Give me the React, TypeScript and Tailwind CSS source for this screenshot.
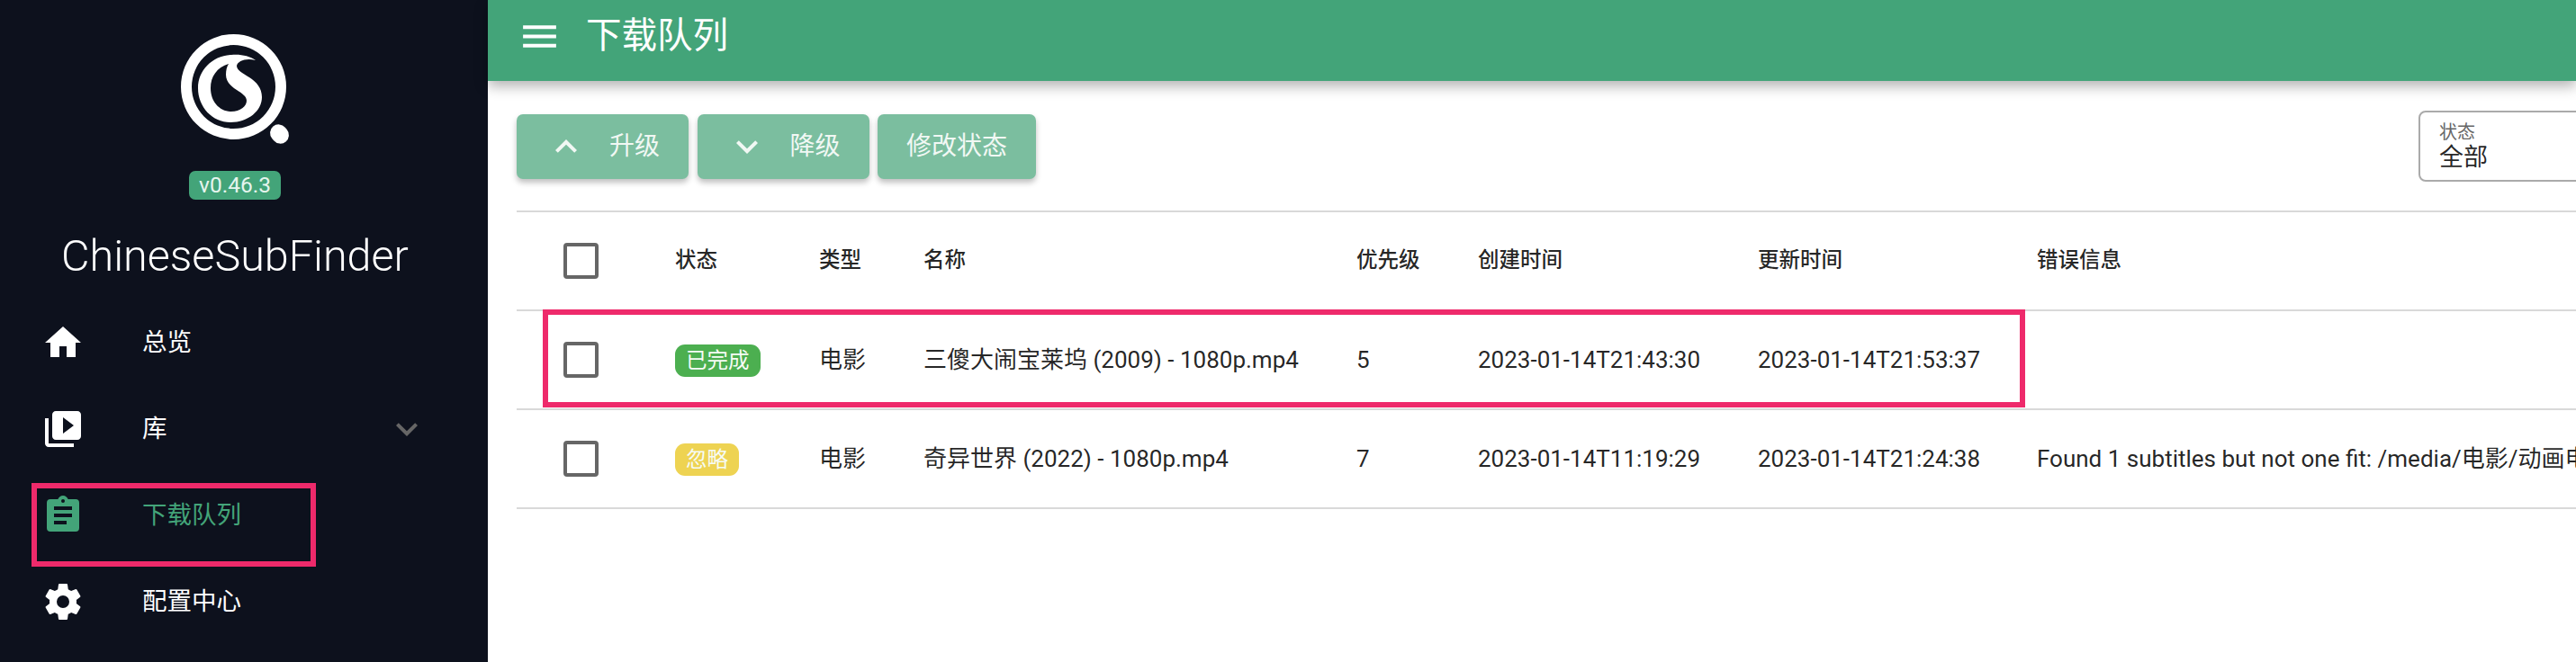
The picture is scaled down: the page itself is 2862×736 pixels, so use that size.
import React from 'react';

const FONT = 'font-[Roboto,"Noto_Sans_CJK_SC",sans-serif]';
const ROW_GRID = 'grid grid-cols-[176px_160px_116px_481px_135px_311px_310px_1fr] items-center h-[110px] border-b-2 border-[#d9d9d9]';

function MdiIcon({ d, className }: { d: string; className: string }) {
  return (
    <svg viewBox="0 0 24 24" fill="currentColor" className={className}>
      <path d={d} />
    </svg>
  );
}

const ICONS = {
  home: 'M10,20V14H14V20H19V12H22L12,3L2,12H5V20H10Z',
  library: 'M4 6H2V20C2 21.1 2.9 22 4 22H18V20H4V6M20 2H8C6.9 2 6 2.9 6 4V16C6 17.1 6.9 18 8 18H20C21.1 18 22 17.1 22 16V4C22 2.9 21.1 2 20 2M12 14.5V5.5L18 10L12 14.5Z',
  clipboard: 'M17,9H7V7H17M17,13H7V11H17M14,17H7V15H14M12,3A1,1 0 0,1 13,4A1,1 0 0,1 12,5A1,1 0 0,1 11,4A1,1 0 0,1 12,3M19,3H14.82C14.4,1.84 13.3,1 12,1C10.7,1 9.6,1.84 9.18,3H5A2,2 0 0,0 3,5V19A2,2 0 0,0 5,21H19A2,2 0 0,0 21,19V5A2,2 0 0,0 19,3Z',
  cog: 'M12,15.5A3.5,3.5 0 0,1 8.5,12A3.5,3.5 0 0,1 12,8.5A3.5,3.5 0 0,1 15.5,12A3.5,3.5 0 0,1 12,15.5M19.43,12.97C19.47,12.65 19.5,12.33 19.5,12C19.5,11.67 19.47,11.34 19.43,11L21.54,9.37C21.73,9.22 21.78,8.95 21.66,8.73L19.66,5.27C19.54,5.05 19.27,4.96 19.05,5.05L16.56,6.05C16.04,5.66 15.5,5.32 14.87,5.07L14.5,2.42C14.46,2.18 14.25,2 14,2H10C9.75,2 9.54,2.18 9.5,2.42L9.13,5.07C8.5,5.32 7.96,5.66 7.44,6.05L4.95,5.05C4.73,4.96 4.46,5.05 4.34,5.27L2.34,8.73C2.21,8.95 2.27,9.22 2.46,9.37L4.57,11C4.53,11.34 4.5,11.67 4.5,12C4.5,12.33 4.53,12.65 4.57,12.97L2.46,14.63C2.27,14.78 2.21,15.05 2.34,15.27L4.34,18.73C4.46,18.95 4.73,19.03 4.95,18.95L7.44,17.94C7.96,18.34 8.5,18.68 9.13,18.93L9.5,21.58C9.54,21.82 9.75,22 10,22H14C14.25,22 14.46,21.82 14.5,21.58L14.87,18.93C15.5,18.67 16.04,18.34 16.56,17.94L19.05,18.95C19.27,19.03 19.54,18.95 19.66,18.73L21.66,15.27C21.78,15.05 21.73,14.78 21.54,14.63L19.43,12.97Z',
  menu: 'M3,6H21V8H3V6M3,11H21V13H3V11M3,16H21V18H3V16Z',
  up: 'M7.41,15.41L12,10.83L16.59,15.41L18,14L12,8L6,14L7.41,15.41Z',
  down: 'M7.41,8.58L12,13.17L16.59,8.58L18,10L12,16L6,10L7.41,8.58Z',
};

function Logo() {
  return (
    <svg viewBox="0 0 140 140" className="w-[140px] h-[140px]" fill="#fff">
      <path
        fillRule="evenodd"
        d="M68.5 10A58.5 58.5 0 1 1 68.5 127A58.5 58.5 0 1 1 68.5 10ZM68.5 22A46.5 46.5 0 1 0 68.5 115A46.5 46.5 0 1 0 68.5 22Z"
      />
      <path
        fillRule="evenodd"
        d="M93 39C86 34 76 32 66 33C45 34 29 50 29 70C29 91 45 108 65 108C85 108 100 95 100 80C100 70 94 63 86 58C78 53 72 50 72 45C73 40 82 36 93 39ZM63 43C50 47 43 57 43 70C43 85 53 96 66 96C76 96 83 90 83 84C83 79 78 76 72 72C65 68 60 62 60 55C60 50 61 46 63 43Z"
      />
      <rect x="110" y="110" width="19" height="22" rx="9.5" transform="rotate(-40 119.5 121)" />
    </svg>
  );
}

function NavItem({ icon, label, active, chevron }: { icon: string; label: string; active?: boolean; chevron?: boolean }) {
  return (
    <div className={`flex items-center h-[96px] pl-[46px] pr-[66px] ${active ? 'text-[#43a479]' : 'text-white'}`}>
      <MdiIcon d={icon} className="w-[48px] h-[48px] shrink-0" />
      <span className="ml-[64px] text-[27.5px] flex-1">{label}</span>
      {chevron && <MdiIcon d={ICONS.down} className="w-[48px] h-[48px] text-[#666]" />}
    </div>
  );
}

function Sidebar() {
  return (
    <aside className="w-[542px] shrink-0 bg-[#0d111d] flex flex-col items-stretch">
      <div className="flex flex-col items-center pt-[28px] pr-[20px] h-[333px]">
        <Logo />
        <div className="mt-[22px] h-[32px] w-[102px] rounded-[7px] bg-[#43a479] text-[#e6f5ee] text-[24.5px] flex items-center justify-center">
          v0.46.3
        </div>
        <div className="mt-[35px] text-white text-[48.5px] leading-[56px] font-light whitespace-nowrap">ChineseSubFinder</div>
      </div>
      <nav>
        <NavItem icon={ICONS.home} label="总览" />
        <NavItem icon={ICONS.library} label="库" chevron />
        <NavItem icon={ICONS.clipboard} label="下载队列" active />
        <NavItem icon={ICONS.cog} label="配置中心" />
      </nav>
    </aside>
  );
}

function ActionButton({ icon, label }: { icon?: string; label: string }) {
  return (
    <button className="h-[72px] px-[32px] rounded-[7px] bg-[#7bbe9f] text-[#f1f8f4] text-[28px] flex items-center shadow-[0_4px_6px_rgba(0,0,0,0.25)]">
      {icon && <MdiIcon d={icon} className="w-[48px] h-[48px] -ml-[1px] mr-[24px]" />}
      {label}
    </button>
  );
}

function Checkbox() {
  return <div className="ml-[52px] w-[39px] h-[40px] border-4 border-[#666] rounded-[4px]" />;
}

function StatusChip({ label, color }: { label: string; color: string }) {
  return (
    <span className={`inline-flex h-[36px] items-center px-[12px] rounded-[11px] text-[23.5px] text-[#f6fbf6] ${color}`}>
      {label}
    </span>
  );
}

const HEADERS = ['状态', '类型', '名称', '优先级', '创建时间', '更新时间', '错误信息'];

const ROWS = [
  {
    chip: <StatusChip label="已完成" color="bg-[#4caf50]" />,
    name: '三傻大闹宝莱坞 (2009) - 1080p.mp4',
    priority: '5',
    created: '2023-01-14T21:43:30',
    updated: '2023-01-14T21:53:37',
    error: '',
  },
  {
    chip: <StatusChip label="忽略" color="bg-[#eed352]" />,
    name: '奇异世界 (2022) - 1080p.mp4',
    priority: '7',
    created: '2023-01-14T11:19:29',
    updated: '2023-01-14T21:24:38',
    error: 'Found 1 subtitles but not one fit: /media/电影/动画电影/奇异世界 (2022)/奇异世界 (2022) - 1080p.mp4',
  },
];

function QueueTable() {
  return (
    <div className="mt-[32px] ml-[32px] border-t-2 border-[#d9d9d9] text-[rgba(0,0,0,0.87)]">
      <div className={`${ROW_GRID} text-[23.5px] font-medium`}>
        <Checkbox />
        {HEADERS.map((h) => (
          <div key={h}>{h}</div>
        ))}
      </div>
      {ROWS.map((row) => (
        <div key={row.name} className={`${ROW_GRID} text-[26px]`}>
          <Checkbox />
          <div>{row.chip}</div>
          <div>电影</div>
          <div className="whitespace-nowrap">{row.name}</div>
          <div>{row.priority}</div>
          <div className="whitespace-nowrap">{row.created}</div>
          <div className="whitespace-nowrap">{row.updated}</div>
          <div className="whitespace-nowrap">{row.error}</div>
        </div>
      ))}
    </div>
  );
}

export default function App() {
  return (
    <div className={`relative flex w-[2862px] h-[736px] overflow-hidden bg-white ${FONT}`}>
      <Sidebar />
      <main className="flex-1 min-w-0 flex flex-col">
        <header className="relative z-10 h-[90px] shrink-0 bg-[#43a479] text-white flex items-center pl-[33px] pb-[10px] shadow-[0_6px_14px_rgba(0,0,0,0.3)]">
          <MdiIcon d={ICONS.menu} className="w-[49px] h-[49px]" />
          <span className="ml-[27px] text-[39.5px]">下载队列</span>
        </header>
        <div className="flex items-center mt-[33px] ml-[32px] h-[79px]">
          <div className="flex gap-[9.5px]">
            <ActionButton icon={ICONS.up} label="升级" />
            <ActionButton icon={ICONS.down} label="降级" />
            <ActionButton label="修改状态" />
          </div>
          <div className="ml-auto -mr-[25px] w-[200px] h-[79px] border-2 border-[#aaa] rounded-[8px] pl-[21px] flex flex-col justify-center">
            <div className="text-[20px] leading-[24px] text-[#666]">状态</div>
            <div className="text-[27px] leading-[32px] text-[rgba(0,0,0,0.87)]">全部</div>
          </div>
        </div>
        <QueueTable />
      </main>
      {/* red annotation boxes drawn over the screenshot */}
      <div className="absolute left-[35px] top-[537px] w-[316px] h-[93px] border-[6px] border-[#ee2a6b]" />
      <div className="absolute left-[603px] top-[344px] w-[1647px] h-[109px] border-[6px] border-[#ee2a6b]" />
    </div>
  );
}
